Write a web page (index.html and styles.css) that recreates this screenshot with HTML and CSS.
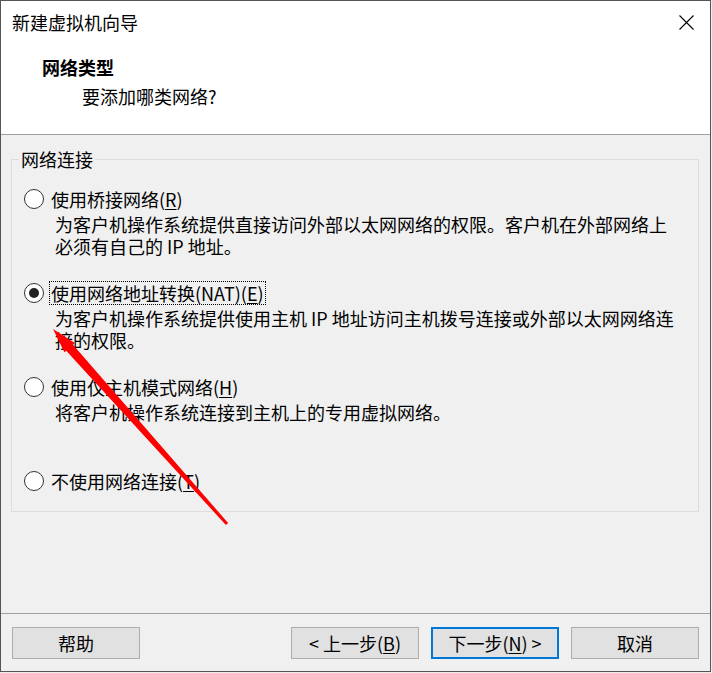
FILE: index.html
```html
<!DOCTYPE html>
<html lang="zh-CN">
<head>
<meta charset="utf-8">
<title>新建虚拟机向导</title>
<link rel="stylesheet" href="styles.css">
</head>
<body>
<div class="window">
  <header class="head">
    <div class="titlebar">
      <span class="title">新建虚拟机向导</span>
      <svg class="close" width="15" height="15" viewBox="0 0 15 15"><path d="M0.5 0.5 L14.5 14.5 M14.5 0.5 L0.5 14.5" stroke="#000" stroke-width="1.1" fill="none"/></svg>
    </div>
    <div class="heading">网络类型</div>
    <div class="subheading">要添加哪类网络?</div>
  </header>
  <main class="content">
    <div class="group">
      <div class="group-title">网络连接</div>
      <div class="options">
        <div class="option">
          <span class="radio"></span>
          <div class="opt-text">
            <span class="label">使用桥接网络(<u>R</u>)</span>
            <div class="desc">
              <span class="line">为客户机操作系统提供直接访问外部以太网网络的权限。客户机在外部网络上</span>
              <span class="line">必须有自己的 IP 地址。</span>
            </div>
          </div>
        </div>
        <div class="option">
          <span class="radio checked"></span>
          <div class="opt-text">
            <span class="label focus">使用网络地址转换(NAT)(<u>E</u>)</span>
            <div class="desc">
              <span class="line">为客户机操作系统提供使用主机 IP 地址访问主机拨号连接或外部以太网网络连</span>
              <span class="line">接的权限。</span>
            </div>
          </div>
        </div>
        <div class="option">
          <span class="radio"></span>
          <div class="opt-text">
            <span class="label">使用仅主机模式网络(<u>H</u>)</span>
            <div class="desc">
              <span class="line">将客户机操作系统连接到主机上的专用虚拟网络。</span>
            </div>
          </div>
        </div>
        <div class="option last">
          <span class="radio"></span>
          <div class="opt-text">
            <span class="label">不使用网络连接(<u>T</u>)</span>
          </div>
        </div>
      </div>
    </div>
  </main>
  <footer class="foot">
    <button class="btn">帮助</button>
    <span class="spacer"></span>
    <button class="btn">&lt; 上一步(<u>B</u>)</button>
    <button class="btn default">下一步(<u>N</u>) &gt;</button>
    <button class="btn">取消</button>
  </footer>
  <svg class="arrow" width="711" height="672" viewBox="0 0 711 672">
    <polygon fill="#ff0000" points="53,329 74.8,343.1 73,344.7 228.1,523 225.9,525 66.2,350.7 64.4,352.3"/>
  </svg>
</div>
</body>
</html>
```

FILE: styles.css
```css
* { box-sizing: border-box; }
html, body { margin: 0; padding: 0; }
body {
  background: #eeeeee;
  font-family: "Noto Sans CJK SC", "Microsoft YaHei", "Noto Sans", sans-serif;
  font-size: 18px;
  color: #000;
}
.window {
  position: relative;
  width: 711px;
  height: 672px;
  border: 1px solid #555;
  display: flex;
  flex-direction: column;
  background: #f0f0f0;
}
.head {
  height: 134px;
  flex: none;
  background: #fff;
  border-bottom: 1px solid #a0a0a0;
  padding: 9px 16px 0 11px;
}
.titlebar {
  display: flex;
  justify-content: space-between;
  align-items: center;
  height: 24px;
  line-height: 24px;
}
.close { display: block; }
.heading {
  margin: 21px 0 0 30px;
  line-height: 24px;
  font-weight: bold;
}
.subheading {
  margin: 5px 0 0 70px;
  line-height: 24px;
}
.content {
  flex: 1;
  padding: 24px 11px 0 10px;
}
.group {
  border: 1px solid #dcdcdc;
  height: 353px;
  padding: 0 12px;
}
.group-title {
  margin: -12px 0 0 -5px;
  padding: 0 2px;
  width: max-content;
  background: #f0f0f0;
  line-height: 22px;
}
.options {
  margin-top: 17px;
}
.option {
  display: flex;
  align-items: flex-start;
  height: 94px;
}
.option.last { height: 24px; }
.radio {
  flex: none;
  width: 20px;
  height: 20px;
  margin-top: 2px;
  margin-right: 5px;
  border: 1.5px solid #333;
  border-radius: 50%;
  background: #fff;
  display: flex;
  align-items: center;
  justify-content: center;
}
.radio.checked::after {
  content: "";
  width: 10px;
  height: 10px;
  border-radius: 50%;
  background: #222;
}
.opt-text {
  display: flex;
  flex-direction: column;
  align-items: flex-start;
}
.label {
  display: block;
  line-height: 22px;
  padding: 0 1px;
  border: 1px solid transparent;
}
.label.focus {
  border: 1px dotted #000;
}
.desc {
  margin: 2px 0 0 6px;
  display: flex;
  flex-direction: column;
}
.line {
  display: block;
  height: 22px;
  line-height: 22px;
}
u { text-decoration: underline; text-underline-offset: 2px; }
.foot {
  flex: none;
  height: 58px;
  border-top: 1px solid #a0a0a0;
  padding: 13px 11px 0 11px;
  display: flex;
  align-items: flex-start;
  gap: 12px;
}
.spacer { flex: 1; }
.btn {
  width: 128px;
  height: 32px;
  border: 1px solid #adadad;
  background: #e1e1e1;
  font-family: inherit;
  font-size: 18px;
  color: #000;
  padding: 0;
  line-height: 28px;
}
.btn.default {
  border: 2px solid #0078d7;
}
.arrow {
  position: absolute;
  left: -1px;
  top: -1px;
  pointer-events: none;
}
```
